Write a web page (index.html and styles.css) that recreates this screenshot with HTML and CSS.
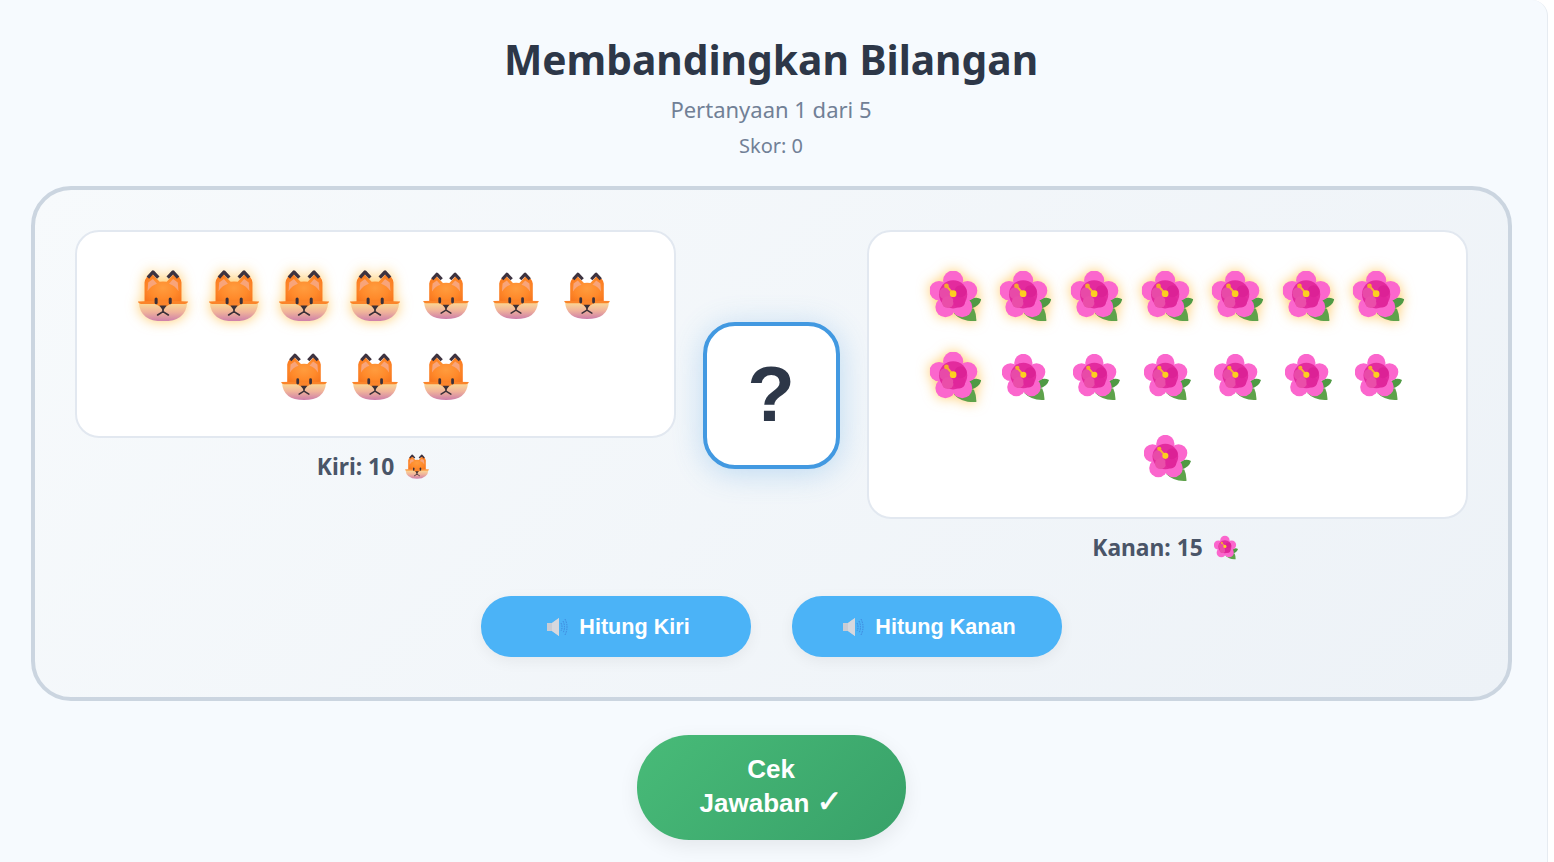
FILE: index.html
```html
<!DOCTYPE html>
<html lang="id">
<head>
<meta charset="utf-8">
<title>Membandingkan Bilangan</title>
<link rel="stylesheet" href="styles.css">
</head>
<body>
<svg class="defs" aria-hidden="true">
  <defs>
    <radialGradient id="foxHead" cx="0.5" cy="0.5" r="0.62">
      <stop offset="0" stop-color="#ff9c3e"/><stop offset="0.6" stop-color="#ff8a2b"/><stop offset="1" stop-color="#f8771e"/>
    </radialGradient>
    <linearGradient id="foxBowl" x1="0" y1="0" x2="0" y2="1">
      <stop offset="0" stop-color="#fcdc94"/><stop offset="0.5" stop-color="#f0b39a"/><stop offset="1" stop-color="#cd7eaa"/>
    </linearGradient>
    <symbol id="fox" viewBox="55 58 150 154">
      <path d="M75 155 L75 96 Q77 78 97 70 L120 94 Q130 92 141 94 L163 70 Q183 78 185 96 L185 155 Z" fill="url(#foxHead)"/>
      <path d="M84 122 L86 96 L100 86 L112 100 Q94 106 84 122 Z" fill="#f8a47a"/>
      <path d="M176 122 L174 96 L160 86 L148 100 Q166 106 176 122 Z" fill="#f8a47a"/>
      <path d="M85 82 L100 65 L116 82" fill="none" stroke="#3d3340" stroke-width="10" stroke-linejoin="round"/>
      <path d="M144 82 L160 65 L175 82" fill="none" stroke="#3d3340" stroke-width="10" stroke-linejoin="round"/>
      <path d="M58 156 Q62 212 130 212 Q198 212 202 156 Z" fill="url(#foxBowl)"/>
      <path d="M55 153 Q130 149 205 153 Q204 159 196 160 L152 160 L130 174 L108 160 L64 160 Q56 159 55 153 Z" fill="#fb842a"/>
      <rect x="105" y="141" width="9" height="20" rx="4.5" fill="#3a3038"/>
      <rect x="147" y="141" width="9" height="20" rx="4.5" fill="#3a3038"/>
      <path d="M119 165 L141 165 L130 180 Z" fill="#3a3038"/>
      <path d="M130 176 L130 183 L114 193 M130 183 L146 193" fill="none" stroke="#3a3038" stroke-width="5" stroke-linecap="round"/>
    </symbol>
    <symbol id="flower" viewBox="58 45 154 150">
      <path d="M170 138 Q192 118 212 130 Q206 152 180 158 Z" fill="#4f9a44"/>
      <path d="M130 172 Q170 150 190 158 Q198 176 197 195 Q155 198 130 172 Z" fill="#5ea24b"/>
      <circle cx="128" cy="74" r="30" fill="#fb66cd"/>
      <circle cx="86" cy="104" r="29" fill="#fb66cd"/>
      <circle cx="171" cy="104" r="29" fill="#fb66cd"/>
      <circle cx="105" cy="153" r="30" fill="#fb66cd"/>
      <circle cx="155" cy="153" r="30" fill="#fb66cd"/>
      <circle cx="128" cy="115" r="42" fill="#e32b9e"/>
      <circle cx="106" cy="112" r="19" fill="#e84aa8"/>
      <circle cx="112" cy="138" r="18" fill="#ea4ea9"/>
      <circle cx="146" cy="136" r="18" fill="#e0269b"/>
      <circle cx="150" cy="106" r="18" fill="#dc2196"/>
      <path d="M108 90 L128 113" stroke="#f9b233" stroke-width="6"/>
      <circle cx="108" cy="90" r="7" fill="#f6a92f"/>
      <circle cx="128" cy="113" r="10" fill="#fdd01f"/>
    </symbol>
    <symbol id="speaker" viewBox="0 0 21 18">
      <path d="M0 5 L5 5 L12 0 L12 18 L5 13 L0 13 Z" fill="#c9ccd4"/>
      <path d="M5 5 L12 0 L12 18 L5 13 Z" fill="#d6d8de"/>
      <path d="M14 5 Q16 9 14 13 M16 3 Q19 9 16 15 M18 1 Q22 9 18 17" fill="none" stroke="#3f86dc" stroke-width="1" stroke-dasharray="1.5 1"/>
    </symbol>
  </defs>
</svg>

<main class="page">
  <header class="head">
    <h1 class="title">Membandingkan Bilangan</h1>
    <p class="progress">Pertanyaan 1 dari 5</p>
    <p class="score">Skor: 0</p>
  </header>

  <section class="board">
    <div class="compare">
      <div class="side">
        <div class="panel">
          <span class="item lit"><svg class="fox"><use href="#fox"/></svg></span>
          <span class="item lit"><svg class="fox"><use href="#fox"/></svg></span>
          <span class="item lit"><svg class="fox"><use href="#fox"/></svg></span>
          <span class="item lit"><svg class="fox"><use href="#fox"/></svg></span>
          <span class="item"><svg class="fox"><use href="#fox"/></svg></span>
          <span class="item"><svg class="fox"><use href="#fox"/></svg></span>
          <span class="item"><svg class="fox"><use href="#fox"/></svg></span>
          <span class="item"><svg class="fox"><use href="#fox"/></svg></span>
          <span class="item"><svg class="fox"><use href="#fox"/></svg></span>
          <span class="item"><svg class="fox"><use href="#fox"/></svg></span>
        </div>
        <p class="count">Kiri: 10 <svg class="mini"><use href="#fox"/></svg></p>
      </div>

      <div class="sign">?</div>

      <div class="side">
        <div class="panel">
          <span class="item lit"><svg class="flower"><use href="#flower"/></svg></span>
          <span class="item lit"><svg class="flower"><use href="#flower"/></svg></span>
          <span class="item lit"><svg class="flower"><use href="#flower"/></svg></span>
          <span class="item lit"><svg class="flower"><use href="#flower"/></svg></span>
          <span class="item lit"><svg class="flower"><use href="#flower"/></svg></span>
          <span class="item lit"><svg class="flower"><use href="#flower"/></svg></span>
          <span class="item lit"><svg class="flower"><use href="#flower"/></svg></span>
          <span class="item lit"><svg class="flower"><use href="#flower"/></svg></span>
          <span class="item"><svg class="flower"><use href="#flower"/></svg></span>
          <span class="item"><svg class="flower"><use href="#flower"/></svg></span>
          <span class="item"><svg class="flower"><use href="#flower"/></svg></span>
          <span class="item"><svg class="flower"><use href="#flower"/></svg></span>
          <span class="item"><svg class="flower"><use href="#flower"/></svg></span>
          <span class="item"><svg class="flower"><use href="#flower"/></svg></span>
          <span class="item"><svg class="flower"><use href="#flower"/></svg></span>
        </div>
        <p class="count">Kanan: 15 <svg class="mini"><use href="#flower"/></svg></p>
      </div>
    </div>

    <div class="actions">
      <button class="speak" type="button"><svg class="speaker"><use href="#speaker"/></svg>Hitung Kiri</button>
      <button class="speak" type="button"><svg class="speaker"><use href="#speaker"/></svg>Hitung Kanan</button>
    </div>
  </section>

  <button class="check" type="button">Cek<br>Jawaban<span class="tick">✓</span></button>
</main>
</body>
</html>
```

FILE: styles.css
```css
* {
  box-sizing: border-box;
}

html,
body {
  margin: 0;
  height: 100%;
  overflow: hidden;
  background: #ffffff;
}

.defs {
  position: absolute;
  width: 0;
  height: 0;
}

.page {
  width: 1548px;
  height: 862px;
  padding: 29px 36px 0 31px;
  background: #f6fafe;
  border-right: 1px solid #e6ebf1;
  border-top-right-radius: 16px;
  display: flex;
  flex-direction: column;
  align-items: center;
  font-family: "Noto Sans", sans-serif;
}

.head {
  text-align: center;
}

.title {
  margin: 0;
  font-size: 40.7px;
  line-height: 60px;
  font-weight: 700;
  color: #2d3748;
}

.progress {
  margin: 4px 0 0;
  font-size: 22px;
  line-height: 32px;
  color: #718096;
}

.score {
  margin: 6px 0 0;
  font-size: 20px;
  line-height: 30px;
  color: #718096;
}

.board {
  width: 1481px;
  height: 515px;
  margin-top: 25px;
  padding: 40px;
  border: 4px solid #cbd5e0;
  border-radius: 40px;
  background: linear-gradient(135deg, #f7fafc, #edf2f7);
}

.compare {
  display: flex;
  justify-content: space-between;
  height: 331px;
}

.side {
  width: 601px;
}

.panel {
  display: flex;
  flex-wrap: wrap;
  justify-content: center;
  gap: 16px;
  padding: 31px 40px 27px;
  background: #ffffff;
  border: 2px solid #e2e8f0;
  border-radius: 24px;
}

.item {
  width: 54.6px;
  height: 65px;
  display: flex;
  align-items: center;
  justify-content: center;
}

.fox {
  width: 46px;
  height: 47px;
}

.flower {
  width: 47px;
  height: 46px;
}

.lit svg {
  transform: scale(1.1);
  filter: drop-shadow(0 0 6px rgba(255, 165, 0, 0.6));
}

.count {
  margin: 13px 0 0;
  padding-right: 4px;
  height: 30px;
  display: flex;
  align-items: center;
  justify-content: center;
  gap: 11px;
  font-size: 22.8px;
  font-weight: 700;
  color: #4a5568;
}

.mini {
  width: 24px;
  height: 25px;
}

.sign {
  align-self: center;
  width: 137px;
  padding: 23px 0 25px;
  text-align: center;
  background: #ffffff;
  border: 4px solid #4299e1;
  border-radius: 32px;
  box-shadow: 0 4px 30px rgba(66, 153, 225, 0.3);
  font-family: "Liberation Sans", sans-serif;
  font-size: 78px;
  line-height: 91px;
  font-weight: 700;
  color: #2d3748;
}

.actions {
  display: flex;
  justify-content: center;
  gap: 41px;
  margin-top: 35px;
}

.speak {
  width: 270px;
  height: 61px;
  padding: 1px 0 0 6px;
  display: flex;
  align-items: center;
  justify-content: center;
  gap: 11px;
  border: 0;
  border-radius: 30px;
  background: #4bb3f7;
  box-shadow: 0 4px 15px rgba(0, 0, 0, 0.06);
  font-family: "Liberation Sans", sans-serif;
  font-size: 21.6px;
  font-weight: 700;
  color: #ffffff;
}

.speaker {
  width: 21px;
  height: 18px;
}

.check {
  width: 269px;
  height: 105px;
  margin-top: 34px;
  padding: 0 0 4px;
  border: 0;
  border-radius: 52px;
  background: linear-gradient(135deg, #48bb78, #38a169);
  box-shadow: 0 6px 20px rgba(0, 0, 0, 0.08);
  font-family: "Liberation Sans", sans-serif;
  font-size: 26px;
  line-height: 34px;
  font-weight: 700;
  color: #ffffff;
}

.tick {
  margin-left: 7px;
  font-family: "DejaVu Sans", sans-serif;
  font-size: 31px;
  line-height: 0;
  font-weight: 700;
  -webkit-text-stroke: 0.6px #ffffff;
}
```
